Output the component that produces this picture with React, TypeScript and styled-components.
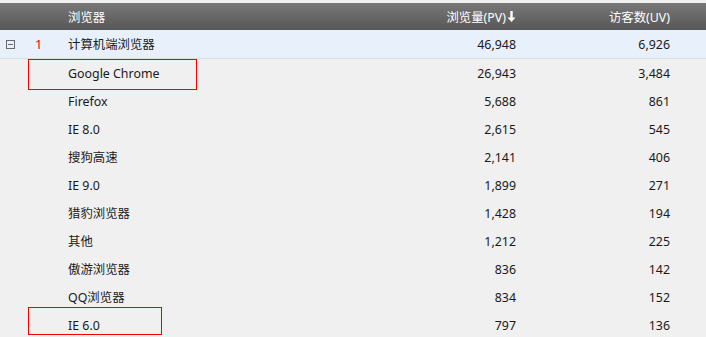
import React from 'react';
import styled, { createGlobalStyle } from 'styled-components';

// types
type Box = {
    top: number;
    width: number;
    height: number;
};

type Row = {
    name: string;
    pv: string;
    uv: string;
    box?: Box;
};

const rows: Row[] = [
    { name: 'Google Chrome', pv: '26,943', uv: '3,484', box: { top: 0, width: 169, height: 31 } },
    { name: 'Firefox', pv: '5,688', uv: '861' },
    { name: 'IE 8.0', pv: '2,615', uv: '545' },
    { name: '搜狗高速', pv: '2,141', uv: '406' },
    { name: 'IE 9.0', pv: '1,899', uv: '271' },
    { name: '猎豹浏览器', pv: '1,428', uv: '194' },
    { name: '其他', pv: '1,212', uv: '225' },
    { name: '傲游浏览器', pv: '836', uv: '142' },
    { name: 'QQ浏览器', pv: '834', uv: '152' },
    { name: 'IE 6.0', pv: '797', uv: '136', box: { top: -4, width: 134, height: 28 } }
];

const GlobalStyle = createGlobalStyle`
    body {
        margin: 0;
        background: #f0f0f0;
        font-family: "Noto Sans", "Noto Sans CJK SC", sans-serif;
        font-size: 12.4px;
        color: #1a1a1a;
    }
`;

// local components
const Table = styled.div`
    width: 706px;
    height: 337px;
    padding-top: 3px;
    box-sizing: border-box;
    overflow: hidden;
    background: #f0f0f0;
`;

const Line = styled.div<{ $height: number }>`
    position: relative;
    display: grid;
    grid-template-columns: 22px 46px 1fr 116px 154px 36px;
    align-items: center;
    height: ${(p) => p.$height}px;
`;

const Header = styled(Line)`
    background: linear-gradient(#787878, #575757);
    color: #ffffff;
`;

const GroupRow = styled(Line)`
    background: #e7f0fb;
    border-bottom: 1px solid #d9dee4;
`;

const Cell = styled.div<{ $right?: boolean }>`
    text-align: ${(p) => (p.$right ? 'right' : 'left')};
    white-space: nowrap;
`;

const Index = styled.div`
    color: #ff0000;
    font-size: 13px;
    padding-left: 13px;
`;

const Toggle = styled.div`
    width: 9px;
    height: 9px;
    margin-left: 6px;
    border: 1px solid #6a6a6a;
    box-sizing: border-box;
    display: flex;
    align-items: center;
    justify-content: center;

    &::after {
        content: '';
        width: 5px;
        height: 1px;
        background: #6a6a6a;
    }
`;

const Sortable = styled.span`
    display: inline-flex;
    align-items: center;
    gap: 1px;
`;

const Mark = styled.div<{ $width: number; $height: number; $top: number }>`
    position: absolute;
    left: 28px;
    top: ${(p) => p.$top}px;
    width: ${(p) => p.$width}px;
    height: ${(p) => p.$height}px;
    border: 1px solid #f00000;
    box-sizing: border-box;
    pointer-events: none;
`;

const DownArrow = () => (
    <svg width='9' height='11' viewBox='0 0 9 11'>
        <path d='M3.3 0h2.4v6.5h2.8L4.5 11 0.5 6.5h2.8z' fill='#ffffff' />
    </svg>
);

// export
export default () => {
    return (
        <>
            <GlobalStyle />
            <Table>
                <Header $height={27}>
                    <span />
                    <span />
                    <Cell>浏览器</Cell>
                    <Cell $right>
                        <Sortable>
                            浏览量(PV)
                            <DownArrow />
                        </Sortable>
                    </Cell>
                    <Cell $right>访客数(UV)</Cell>
                </Header>
                <GroupRow $height={28}>
                    <Toggle />
                    <Index>1</Index>
                    <Cell>计算机端浏览器</Cell>
                    <Cell $right>46,948</Cell>
                    <Cell $right>6,926</Cell>
                </GroupRow>
                {rows.map((r) => (
                    <Line $height={28} key={r.name}>
                        <span />
                        <span />
                        <Cell>{r.name}</Cell>
                        <Cell $right>{r.pv}</Cell>
                        <Cell $right>{r.uv}</Cell>
                        {r.box && <Mark $top={r.box.top} $width={r.box.width} $height={r.box.height} />}
                    </Line>
                ))}
            </Table>
        </>
    );
};
